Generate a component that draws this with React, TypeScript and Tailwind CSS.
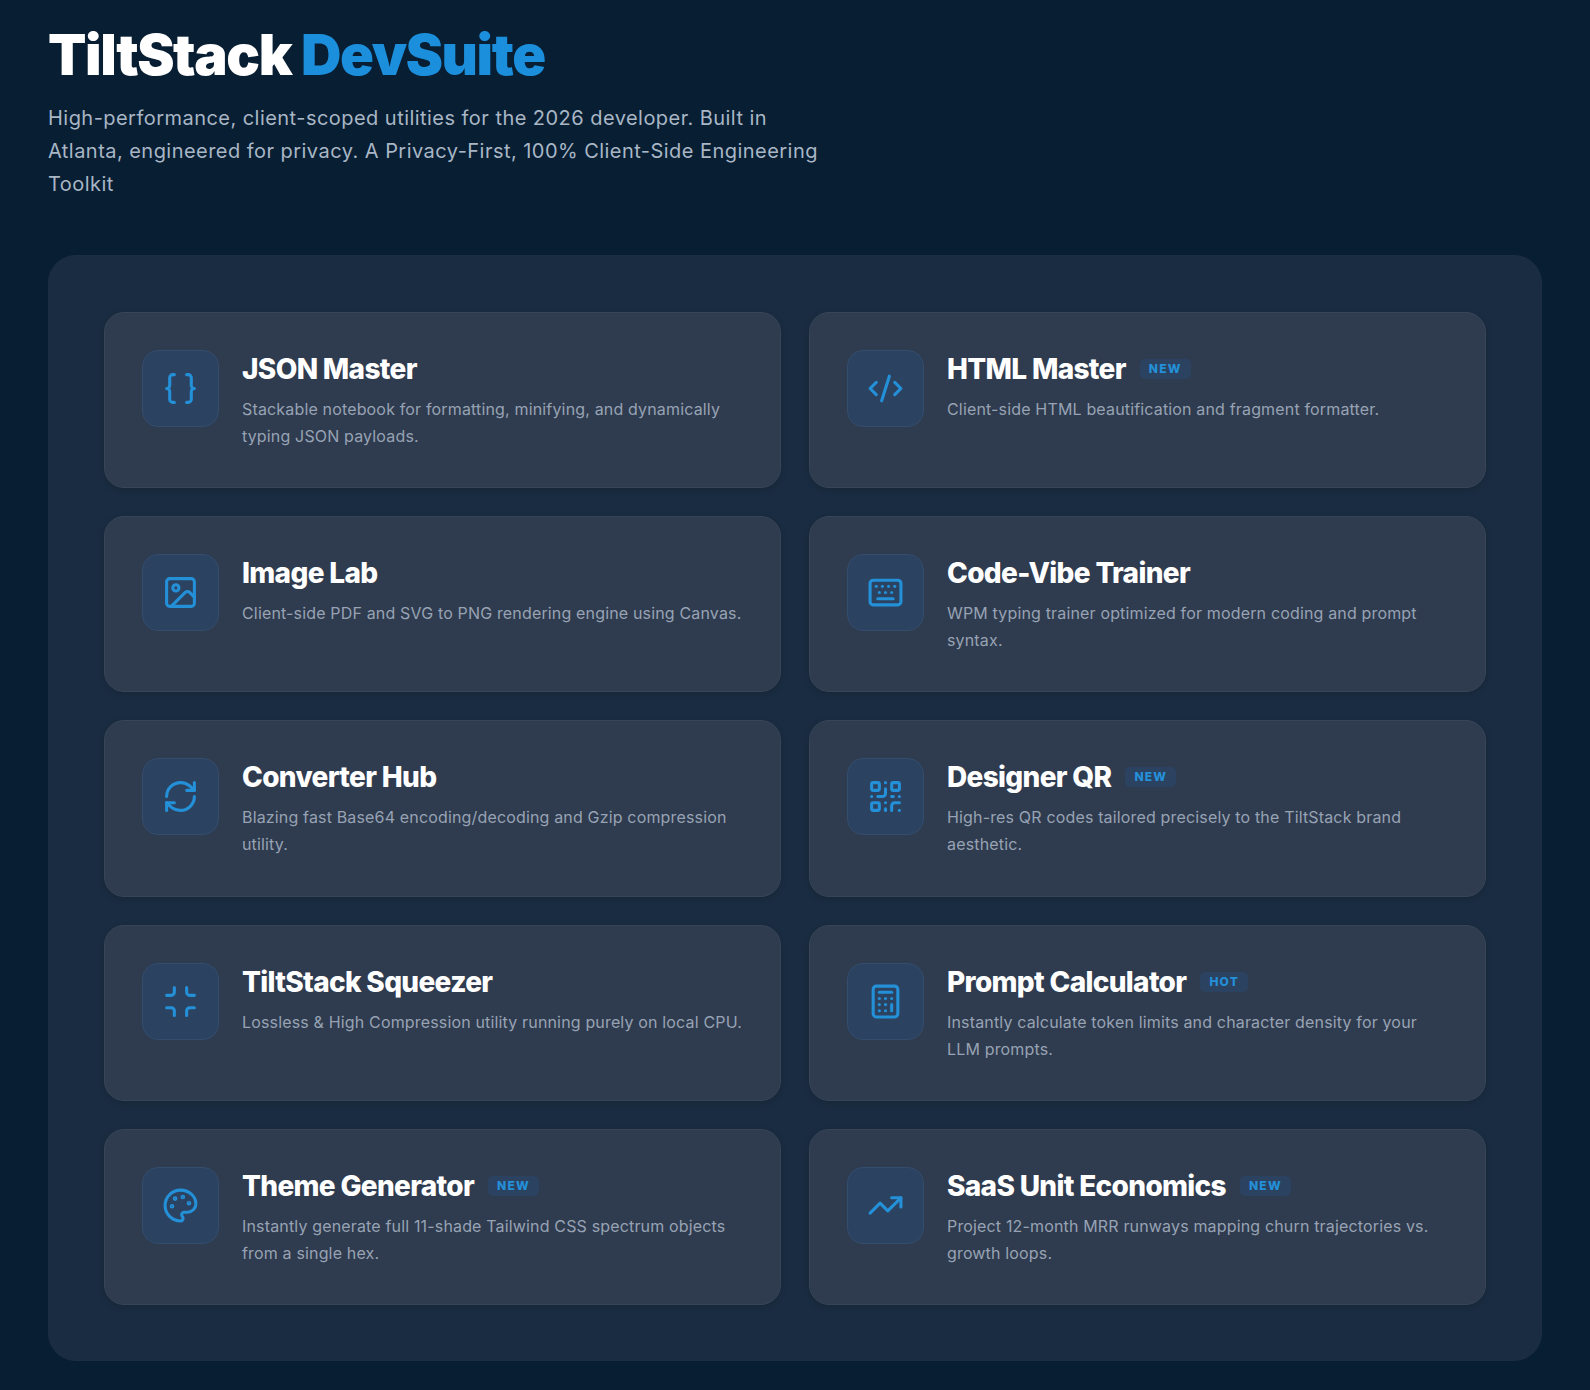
import { Braces, CodeXml, Image, Keyboard, RefreshCw, QrCode, Minimize, Calculator, TrendingUp } from 'lucide-react'

type IconProps = { size?: number; strokeWidth?: number; className?: string }

type Tool = {
    name: string
    desc: string
    icon: React.ComponentType<IconProps>
    badge?: string
}

// older lucide palette, the current one has a different outline
function PaletteIcon({ size, strokeWidth, className }: IconProps) {
    return (
        <svg width={size} height={size} viewBox="0 0 24 24" fill="none" stroke="currentColor" strokeWidth={strokeWidth} strokeLinecap="round" strokeLinejoin="round" className={className}>
            <circle cx="13.5" cy="6.5" r=".5" fill="currentColor" />
            <circle cx="17.5" cy="10.5" r=".5" fill="currentColor" />
            <circle cx="8.5" cy="7.5" r=".5" fill="currentColor" />
            <circle cx="6.5" cy="12.5" r=".5" fill="currentColor" />
            <path d="M12 2C6.5 2 2 6.5 2 12s4.5 10 10 10c.926 0 1.648-.746 1.648-1.688 0-.437-.18-.835-.437-1.125-.29-.289-.438-.652-.438-1.125a1.64 1.64 0 0 1 1.668-1.668h1.996c3.051 0 5.555-2.503 5.555-5.554C21.965 6.012 17.461 2 12 2z" />
        </svg>
    )
}

const tools: Tool[] = [
    { name: 'JSON Master', desc: 'Stackable notebook for formatting, minifying, and dynamically typing JSON payloads.', icon: Braces },
    { name: 'HTML Master', desc: 'Client-side HTML beautification and fragment formatter.', icon: CodeXml, badge: 'NEW' },
    { name: 'Image Lab', desc: 'Client-side PDF and SVG to PNG rendering engine using Canvas.', icon: Image },
    { name: 'Code-Vibe Trainer', desc: 'WPM typing trainer optimized for modern coding and prompt syntax.', icon: Keyboard },
    { name: 'Converter Hub', desc: 'Blazing fast Base64 encoding/decoding and Gzip compression utility.', icon: RefreshCw },
    { name: 'Designer QR', desc: 'High-res QR codes tailored precisely to the TiltStack brand aesthetic.', icon: QrCode, badge: 'NEW' },
    { name: 'TiltStack Squeezer', desc: 'Lossless & High Compression utility running purely on local CPU.', icon: Minimize },
    { name: 'Prompt Calculator', desc: 'Instantly calculate token limits and character density for your LLM prompts.', icon: Calculator, badge: 'HOT' },
    { name: 'Theme Generator', desc: 'Instantly generate full 11-shade Tailwind CSS spectrum objects from a single hex.', icon: PaletteIcon, badge: 'NEW' },
    { name: 'SaaS Unit Economics', desc: 'Project 12-month MRR runways mapping churn trajectories vs. growth loops.', icon: TrendingUp, badge: 'NEW' },
]

function ToolCard({ tool }: { tool: Tool }) {
    const Icon = tool.icon
    return (
        <div className="flex gap-[23px] rounded-[20px] border border-[#374557] bg-[#2f3b4e] p-[37px] pb-[37.2px] shadow-[0_2px_6px_rgba(0,0,0,0.12)]">
            <div className="flex h-[77px] w-[77px] shrink-0 items-center justify-center rounded-2xl border border-[#344d6c] bg-[#2b4261]">
                <Icon size={37} strokeWidth={2} className="text-[#2490d8]" />
            </div>
            <div className="min-w-0 flex-1">
                <div className="flex items-center gap-[14px]">
                    <h3 className="text-[28px] leading-[38px] font-extrabold tracking-[-0.024em] text-white">{tool.name}</h3>
                    {tool.badge && (
                        <span className="rounded-[5px] bg-[#2b4261] px-[9px] py-[3px] text-xs leading-[14px] font-extrabold tracking-[0.1em] text-[#2490d8]">
                            {tool.badge}
                        </span>
                    )}
                </div>
                <p className="mt-[8px] text-base leading-[27px] tracking-[0.01em] text-[#97a3b4]">{tool.desc}</p>
            </div>
        </div>
    )
}

export default function App() {
    return (
        <div className="min-h-screen bg-[#071e33] px-12 pt-[22px] pb-[29px] font-['Inter',sans-serif]">
            <h1 className="text-[56px] leading-[66px] font-black tracking-[-0.025em] text-white">
                TiltStack <span className="text-[#1c8fdc]">DevSuite</span>
            </h1>
            <p className="mt-[14px] max-w-[780px] text-xl leading-[33px] tracking-[0.023em] text-[#a9b6c5]">
                High-performance, client-scoped utilities for the 2026 developer. Built in Atlanta, engineered for privacy. A Privacy-First, 100% Client-Side Engineering Toolkit
            </p>
            <div className="mt-[54px] grid grid-cols-2 gap-7 rounded-[28px] border border-[#1d2e44] bg-[#1a2c41] p-[55px] pt-[56px]">
                {tools.map((t) => (
                    <ToolCard key={t.name} tool={t} />
                ))}
            </div>
        </div>
    )
}
